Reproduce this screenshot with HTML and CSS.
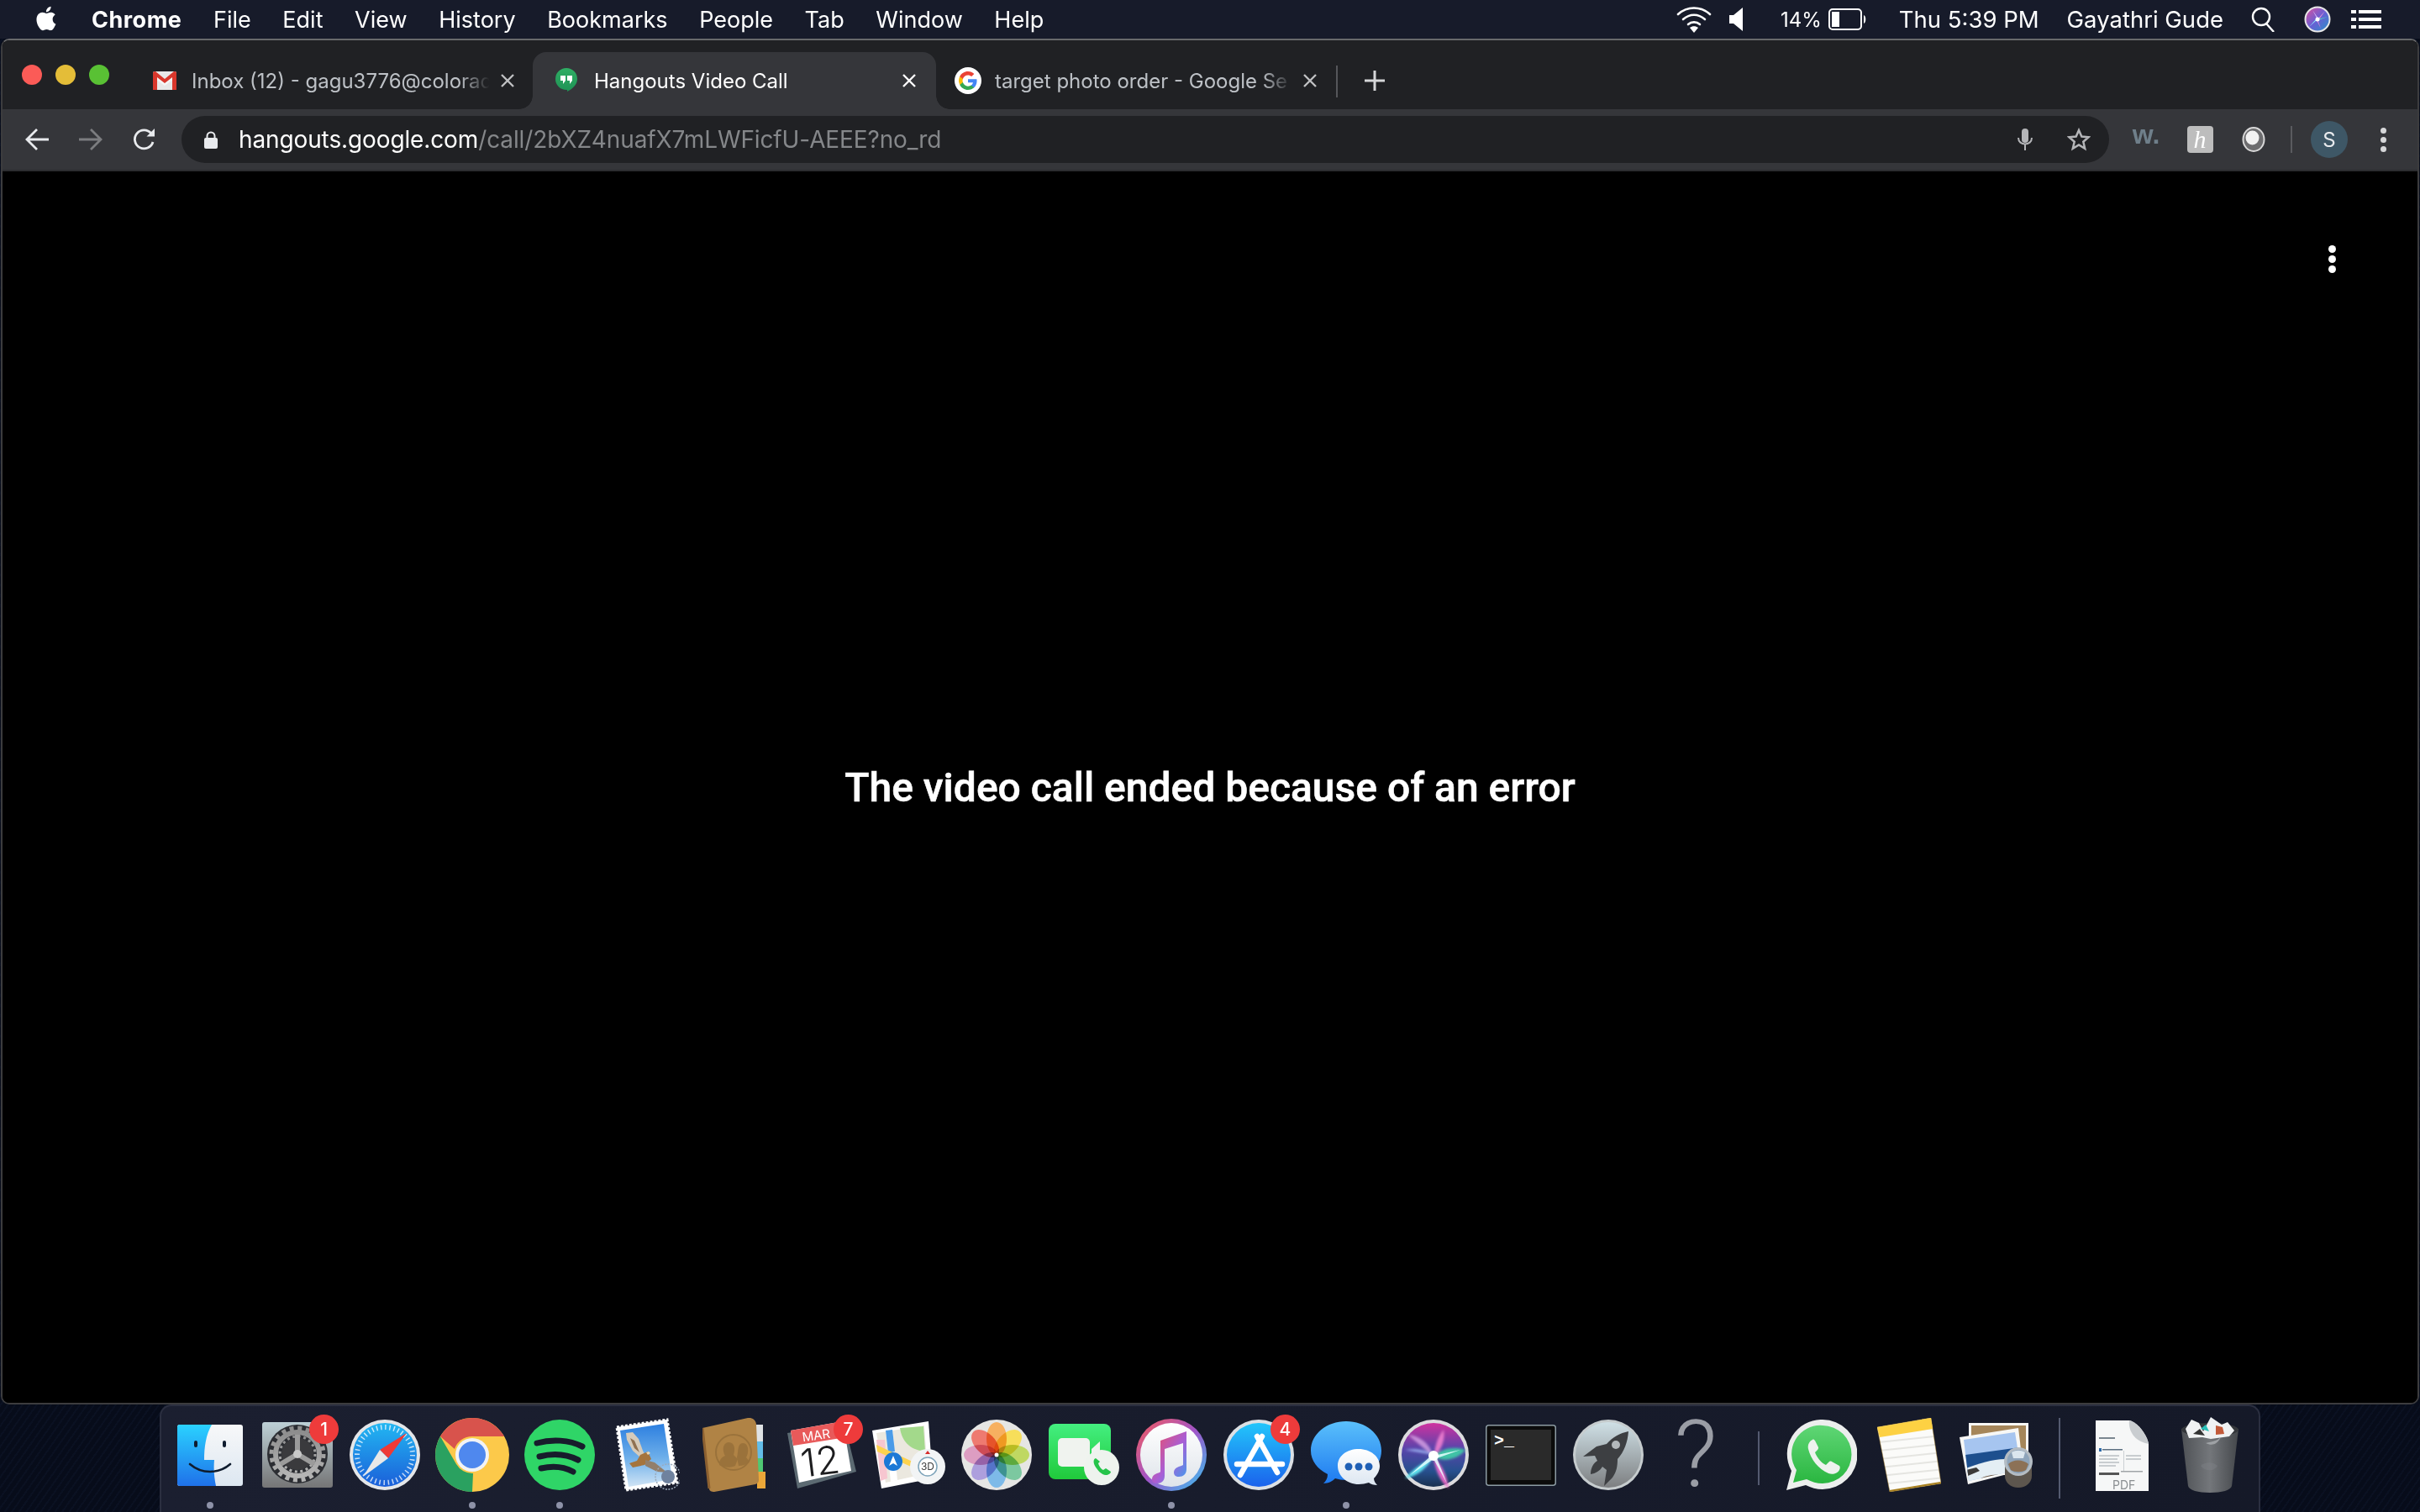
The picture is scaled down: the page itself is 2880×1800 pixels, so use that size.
FILE: index.html
```html
<!DOCTYPE html>
<html lang="en">
<head>
<meta charset="utf-8">
<title>Hangouts Video Call</title>
<link rel="stylesheet" href="styles.css">
</head>
<body>
<div class="desktop">
  <header class="menubar">
    <svg class="apple" viewBox="0 0 24 24" width="34" height="34"><path fill="#fff" d="M18.71 19.5c-.83 1.24-1.71 2.45-3.05 2.47-1.34.03-1.77-.79-3.29-.79-1.53 0-2 .77-3.27.82-1.31.05-2.3-1.32-3.14-2.53C4.25 17 2.94 12.45 4.7 9.39c.87-1.52 2.43-2.48 4.12-2.51 1.28-.02 2.5.87 3.29.87.78 0 2.26-1.07 3.8-.91.65.03 2.47.26 3.64 1.98-.09.06-2.17 1.28-2.15 3.81.03 3.02 2.65 4.03 2.68 4.04-.03.07-.42 1.44-1.38 2.83M13 3.5c.73-.83 1.94-1.46 2.94-1.5.13 1.17-.34 2.35-1.04 3.19-.69.85-1.83 1.51-2.95 1.42-.15-1.15.41-2.35 1.05-3.11z"/></svg>
    <nav class="menus">
      <span class="menu-app">Chrome</span><span>File</span><span>Edit</span><span>View</span><span>History</span><span>Bookmarks</span><span>People</span><span>Tab</span><span>Window</span><span>Help</span>
    </nav>
    <div class="status">
      <svg class="st-wifi" viewBox="0 0 42 32" width="42" height="32" fill="none" stroke="#fff" stroke-width="2.6" stroke-linecap="round"><path d="M2 10C13 0 29 0 40 10"/><path d="M8 16C16 9 26 9 34 16"/><path d="M14 22C18 18.500 24 18.500 28 22"/><path fill="#fff" stroke="none" d="M21 32l-5-6c3-2.500 7-2.500 10 0z"/></svg>
      <svg class="st-vol" viewBox="0 0 16 28" width="16" height="28"><path fill="#fff" d="M0 9h5L16 0v28L5 19H0z"/></svg>
      <span class="st-pct">14%</span>
      <svg class="st-batt" viewBox="0 0 46 26" width="46" height="26"><rect x="1" y="1" width="38" height="24" rx="4" fill="none" stroke="#fff" stroke-width="2"/><rect x="4" y="4" width="9" height="18" fill="#fff"/><path d="M42 8c3 1 3 9 0 10z" fill="#fff"/></svg>
      <span class="st-time">Thu 5:39 PM</span>
      <span class="st-user">Gayathri Gude</span>
      <svg class="st-search" viewBox="0 0 28 30" width="28" height="30" fill="none" stroke="#fff" stroke-width="2.400"><circle cx="12" cy="12" r="10"/><path d="M18 20l9 10"/></svg>
      <svg class="st-siri" viewBox="0 0 32 32" width="32" height="32"><defs><linearGradient id="mSiri" x1="0" y1="0" x2="1" y2="1"><stop offset="0" stop-color="#d9509f"/><stop offset=".5" stop-color="#6a5fd4"/><stop offset="1" stop-color="#2a8fc8"/></linearGradient></defs><circle cx="16" cy="16" r="15.500" fill="#e8e8e8"/><circle cx="16" cy="16" r="13.500" fill="url(#mSiri)"/><path d="M16 16L25 6 17.500 16.500z" fill="#f59ad0"/><path d="M16 16L28 13 17 17z" fill="#55e0c0"/><path d="M16 16L6 25 15 15z" fill="#8ef0ff"/><path d="M16 16l4 11-5-10z" fill="#ef86d8"/><path d="M16 16L10 5l7 10z" fill="#d9c2ff"/><circle cx="16" cy="16" r="2.500" fill="#fff"/></svg>
      <svg class="st-list" viewBox="0 0 36 22" width="36" height="22" fill="#fff"><rect x="0" y="0" width="6" height="4"/><rect x="9" y="0" width="27" height="4"/><rect x="0" y="9" width="6" height="4"/><rect x="9" y="9" width="27" height="4"/><rect x="0" y="18" width="6" height="4"/><rect x="9" y="18" width="27" height="4"/></svg>
    </div>
  </header>

  <section class="window">
    <div class="tabstrip">
      <div class="lights"><i class="light red"></i><i class="light yellow"></i><i class="light green"></i></div>
      <div class="tab tab-a">
        <svg class="fav" viewBox="0 0 28 22" width="28" height="22"><rect width="28" height="22" rx="2" fill="#e8e8e8"/><path d="M0 2l14 11L28 2v5L14 17 0 7z" fill="#f5f5f5"/><path d="M0 2c0-1 1-2 2-2h1l11 9L25 0h1c1 0 2 1 2 2v20h-5V7l-9 7-9-7v15H0z" fill="#d9372c"/></svg>
        <span class="tab-title">Inbox (12) - gagu3776@colorad</span>
        <svg class="tab-x" viewBox="0 0 16 16" width="16" height="16"><path d="M1 1l14 14M15 1L1 15" stroke="#c0c1c3" stroke-width="2.400"/></svg>
      </div>
      <div class="tab tab-b active">
        <svg class="fav" viewBox="0 0 26 30" width="26" height="30"><defs><linearGradient id="hgo" x1="0" y1="0" x2="0" y2="1"><stop offset="0" stop-color="#2fae64"/><stop offset="1" stop-color="#1f9255"/></linearGradient></defs><path d="M13 0a13 13 0 0 1 13 13c0 7-6 12-12 15v-2.000h-1a13 13 0 0 1 0-26z" fill="url(#hgo)"/><path d="M6 9h6v6l-3 4v-4H6zM14 9h6v6l-3 4v-4h-3z" fill="#fff"/></svg>
        <span class="tab-title">Hangouts Video Call</span>
        <svg class="tab-x" viewBox="0 0 16 16" width="16" height="16"><path d="M1 1l14 14M15 1L1 15" stroke="#fff" stroke-width="2.400"/></svg>
      </div>
      <div class="tab tab-c">
        <svg class="fav" viewBox="0 0 32 32" width="32" height="32"><circle cx="16" cy="16" r="16" fill="#fff"/><g transform="translate(5 5) scale(.917)"><path fill="#4285F4" d="M23.500 12.300c0-.8-.1-1.600-.2-2.300H12v4.500h6.500c-.3 1.500-1.100 2.700-2.400 3.600v3h3.800c2.300-2.100 3.600-5.200 3.600-8.800z"/><path fill="#34A853" d="M12 24c3.200 0 6-1.100 7.900-2.900l-3.800-3c-1.100.7-2.400 1.200-4.100 1.200-3.100 0-5.800-2.100-6.700-5H1.300v3.100C3.300 21.300 7.300 24 12 24z"/><path fill="#FBBC05" d="M5.300 14.300c-.5-1.500-.5-3.100 0-4.600V6.600h-4a12 12 0 0 0 0 10.800z"/><path fill="#EA4335" d="M12 4.800c1.800 0 3.300.6 4.600 1.800l3.400-3.400C17.900 1.200 15.200 0 12 0 7.300 0 3.300 2.700 1.300 6.600l4 3.100c.9-2.800 3.600-4.900 6.700-4.900z"/></g></svg>
        <span class="tab-title">target photo order - Google Se</span>
        <svg class="tab-x" viewBox="0 0 16 16" width="16" height="16"><path d="M1 1l14 14M15 1L1 15" stroke="#c0c1c3" stroke-width="2.400"/></svg>
      </div>
      <i class="tab-sep"></i>
      <svg class="new-tab" viewBox="0 0 24 24" width="24" height="24"><path d="M12 0v24M0 12h24" stroke="#d5d6d8" stroke-width="3"/></svg>
    </div>

    <div class="toolbar">
      <button class="tb-btn"><svg viewBox="0 0 28 26" width="28" height="26" fill="none" stroke="#e8eaed" stroke-width="2.800"><path d="M28 13H3M14 1L2 13l12 12"/></svg></button>
      <button class="tb-btn"><svg viewBox="0 0 28 26" width="28" height="26" fill="none" stroke="#7c7d80" stroke-width="2.800"><path d="M0 13h25M14 1l12 12-12 12"/></svg></button>
      <button class="tb-btn"><svg viewBox="0 0 28 28" width="28" height="28" fill="none" stroke="#e8eaed" stroke-width="2.800"><path d="M24 17a11 11 0 1 1-2-10"/><path d="M26 1v9.500h-9.500z" fill="#e8eaed" stroke="none"/></svg></button>
      <div class="omnibox">
        <svg class="lock" viewBox="0 0 16 21" width="16" height="21"><path d="M3.500 9V6a4.500 4.500 0 0 1 9 0v3" fill="none" stroke="#e8eaed" stroke-width="2"/><rect y="8" width="16" height="13" rx="2" fill="#e8eaed"/></svg>
        <span class="url"><b>hangouts.google.com</b>/call/2bXZ4nuafX7mLWFicfU-AEEE?no_rd</span>
        <span class="omni-icon"><svg viewBox="0 0 20 26" width="20" height="26"><rect x="6" y="0" width="8" height="17" rx="4" fill="#b4b5b8"/><path d="M2 11c0 10 16 10 16 0M10 19v7" fill="none" stroke="#b4b5b8" stroke-width="2"/></svg></span>
        <span class="omni-icon"><svg viewBox="0 0 28 28" width="28" height="28"><path d="M14 3l3.300 7.600 8.200.7-6.200 5.400 1.900 8.100L14 20.500l-7.200 4.300 1.900-8.100-6.200-5.400 8.200-.7z" fill="none" stroke="#b4b5b8" stroke-width="2.500"/></svg></span>
      </div>
      <div class="ext-group">
        <span class="ext ext-w">w.</span>
        <span class="ext"><span class="ext-h">h</span></span>
        <span class="ext"><svg viewBox="0 0 28 32" width="28" height="32"><ellipse cx="14" cy="16" rx="13.500" ry="15" fill="#d8d8d8"/><ellipse cx="14" cy="16" rx="11.500" ry="13" fill="#6c6c6e"/><ellipse cx="12.500" cy="14" rx="8" ry="8.500" fill="#f1f1f1"/></svg></span>
        <i class="ext-sep"></i>
        <span class="ext"><span class="avatar">S</span></span>
        <span class="ext"><span class="kebab small"><i></i><i></i><i></i></span></span>
      </div>
    </div>

    <main class="page">
      <span class="kebab page-menu"><i></i><i></i><i></i></span>
      <h1 class="message">The video call ended because of an error</h1>
    </main>
  </section>

  <footer class="dock">
    <div class="app"><div class="slot">
      <svg viewBox="0 0 78 73" width="78" height="73"><defs><linearGradient id="fb" x1="0" y1="0" x2="0" y2="1"><stop offset="0" stop-color="#2ad2ff"/><stop offset="1" stop-color="#1f71ea"/></linearGradient><linearGradient id="fw" x1="0" y1="0" x2="0" y2="1"><stop offset="0" stop-color="#f7f8f9"/><stop offset="1" stop-color="#dde7f1"/></linearGradient></defs><rect width="78" height="73" rx="3" fill="url(#fw)"/><path d="M3 0h38c-7 12-9 27-9 42h12c-1 11 0 22 2 31H3a3 3 0 0 1-3-3V3a3 3 0 0 1 3-3z" fill="url(#fb)"/><rect x="20" y="19" width="4" height="8" rx="2" fill="#0f1c2e"/><rect x="54" y="19" width="4" height="8" rx="2" fill="#0f1c2e"/><path d="M15 47c14 12 34 12 48 0" fill="none" stroke="#0f1c2e" stroke-width="2.600" stroke-linecap="round"/></svg>
    </div><i class="dot"></i></div>

    <div class="app"><div class="slot">
      <svg viewBox="0 0 84 78" width="84" height="78"><defs><linearGradient id="sp" x1="0" y1="0" x2="0" y2="1"><stop offset="0" stop-color="#bdd0d6"/><stop offset="1" stop-color="#757576"/></linearGradient><linearGradient id="spg" x1="0" y1="0" x2="0" y2="1"><stop offset="0" stop-color="#8d8d8d"/><stop offset="1" stop-color="#b5b5b5"/></linearGradient></defs><rect width="84" height="78" rx="3" fill="url(#sp)"/><ellipse cx="42" cy="38" rx="36" ry="35" fill="#2c2e33"/><circle cx="42" cy="38" r="26" fill="none" stroke="url(#spg)" stroke-width="6"/><circle cx="42" cy="38" r="31" fill="none" stroke="url(#spg)" stroke-width="5" stroke-dasharray="5 4.740"/><circle cx="42" cy="38" r="21" fill="none" stroke="url(#spg)" stroke-width="3" stroke-dasharray="3 3.600"/><circle cx="42" cy="38" r="19" fill="#3a3a3d"/><path d="M42 38V15M42 38L22 50M42 38l20 12" stroke="#9b9b9b" stroke-width="6"/><circle cx="42" cy="38" r="5" fill="#c9c9c9"/></svg>
      <span class="badge">1</span>
    </div><i class="dot off"></i></div>

    <div class="app"><div class="slot">
      <svg viewBox="0 0 84 84" width="84" height="84"><defs><linearGradient id="sf" x1="0" y1="0" x2="0" y2="1"><stop offset="0" stop-color="#22b7f2"/><stop offset="1" stop-color="#1b5fd9"/></linearGradient></defs><circle cx="42" cy="42" r="42" fill="#e4e6e8"/><circle cx="42" cy="42" r="38" fill="url(#sf)"/><circle cx="42" cy="42" r="33" fill="none" stroke="#fff" stroke-opacity=".75" stroke-width="6" stroke-dasharray="1.500 3.680"/><path d="M68 16L36 36l10 10z" fill="#ee3a36"/><path d="M16 68l20-32 10 10z" fill="#e8e8e8"/></svg>
    </div><i class="dot off"></i></div>

    <div class="app"><div class="slot">
      <svg viewBox="0 0 88 88" width="88" height="88"><circle cx="44" cy="44" r="44" fill="#fcc94a"/><path d="M44 0a44 44 0 0 1 38.100 22H44a22 22 0 0 0-21 15L6 22A44 44 0 0 1 44 0z" fill="#d8534c"/><path d="M6 22l19 33a22 22 0 0 0 20 11L44 88h-3A44 44 0 0 1 6 22z" fill="#2aa160"/><circle cx="44" cy="44" r="20" fill="#f2f3f5"/><circle cx="44" cy="44" r="16" fill="#4f88ee"/></svg>
    </div><i class="dot"></i></div>

    <div class="app"><div class="slot">
      <svg viewBox="0 0 84 84" width="84" height="84"><circle cx="42" cy="42" r="42" fill="#2fd567"/><path d="M15 28c18-5 38-4 54 4M18 44c16-4 32-3 46 4M20 58c13-3 27-2 38 4" fill="none" stroke="#181c2c" stroke-width="7" stroke-linecap="round"/></svg>
    </div><i class="dot"></i></div>

    <div class="app"><div class="slot">
      <svg viewBox="0 0 78 88" width="78" height="88"><defs><linearGradient id="msk" x1="0" y1="0" x2="0" y2="1"><stop offset="0" stop-color="#2c7fe0"/><stop offset=".55" stop-color="#6fb0ea"/><stop offset="1" stop-color="#d0e4f5"/></linearGradient></defs><path d="M3 11L63 2l12 75-61 9z" fill="#fff" stroke="#fff" stroke-width="3" stroke-dasharray="3 2"/><path d="M7 15l52-8 10 66-52 9z" fill="url(#msk)"/><path d="M14 18l8-1 7 8 5 14 3 6-6 2-9-8-7-13z" fill="#d5cbbb"/><path d="M19 24l5 3 6 14-6-5z" fill="#8f7152"/><path d="M31 44l9-4 4 9-8 7-14 3-4-5 9-3z" fill="#a5743d"/><path d="M37 50l11 3 15 12-12-1-14-7z" fill="#927f6c"/><path d="M38 41l3-1 2 2-3 2z" fill="#ead8b5"/><circle cx="64" cy="70" r="15" fill="none" stroke="#9ba9ba" stroke-width="1.500" stroke-dasharray="2 1.500"/><circle cx="64" cy="70" r="8" fill="#6f829e"/></svg>
    </div><i class="dot off"></i></div>

    <div class="app"><div class="slot">
      <svg viewBox="0 0 76 88" width="76" height="88"><g><rect x="62" y="8" width="10" height="22" fill="#dfe2e4"/><rect x="62" y="28" width="10" height="22" fill="#63bde8"/><rect x="62" y="48" width="10" height="20" fill="#4fc873"/><rect x="65" y="64" width="10" height="20" fill="#eba739"/></g><path d="M0 12L54 0c5-1 10 3 10 8l3 66c0 3-2 4-4 5L14 88c-3 0-6-1-6-4z" fill="#b08345"/><path d="M0 12l8 72" stroke="#8c6030" stroke-width="3"/><circle cx="37" cy="41" r="21" fill="none" stroke="#9a723b" stroke-width="2"/><path d="M20 56c0-7 3-9 7-11-3-5-4-15 4-16 8 0 8 9 6 15l5 5-3 8c-6 3-14 2-19-1z" fill="#9a723b"/><path d="M41 47c2-5 0-17 7-17 8 0 7 13 4 17l4 5c-3 3-8 5-13 5z" fill="#9a723b"/></svg>
    </div><i class="dot off"></i></div>

    <div class="app"><div class="slot">
      <svg viewBox="0 0 82 82" width="82" height="82"><path d="M0 15L68 4l14 57-70 20z" fill="#5c6a72"/><path d="M4 12L66 1l10 59-62 14z" fill="#fff"/><path d="M4 12L66 1l4 19L7 30z" fill="#e85a5a"/><text class="cal-mon" x="35" y="23" transform="rotate(-8 35 23)">MAR</text><text class="cal-day" x="41" y="65" transform="rotate(-7 41 65)">12</text></svg>
      <span class="badge">7</span>
    </div><i class="dot off"></i></div>

    <div class="app"><div class="slot">
      <svg viewBox="0 0 88 80" width="88" height="80"><path d="M0 11L67 0l5 68-61 12z" fill="#fff"/><path d="M5 14l57-9 4 57-50 11z" fill="#ebe8df"/><path d="M33 8c2 14 10 26 30 28l-2-30z" fill="#a3d98b"/><path d="M5 22l10 0 3 46-8 3z" fill="#f7c6d0"/><path d="M16 11l8-1 6 60-8 2z" fill="#fff"/><path d="M16 11l8-1 3 26-8 2z" fill="#4a9be8"/><path d="M5 28l60 28-1 6L6 36z" fill="#fdd24e"/><circle cx="25" cy="48" r="11" fill="#1b78d6"/><path d="M25 41l5 12-5-3-5 3z" fill="#fff"/><circle cx="66" cy="54" r="21" fill="#f2f4f5"/><circle cx="66" cy="54" r="11" fill="#fff" stroke="#7ea4ba" stroke-width="1.500"/><text class="map-3d" x="66" y="58">3D</text><path d="M66 35l3 4h-6z" fill="#d62a2a"/></svg>
    </div><i class="dot off"></i></div>

    <div class="app"><div class="slot">
      <svg viewBox="0 0 84 84" width="84" height="84"><circle cx="42" cy="42" r="42" fill="#e6e6e4"/><g class="petals" transform="translate(42 42)"><ellipse cy="-19" rx="12" ry="20" fill="#f7b060"/><ellipse cy="-19" rx="12" ry="20" fill="#f7de5a" transform="rotate(45)"/><ellipse cy="-19" rx="12" ry="20" fill="#bfd862" transform="rotate(90)"/><ellipse cy="-19" rx="12" ry="20" fill="#7cc8a0" transform="rotate(135)"/><ellipse cy="-19" rx="12" ry="20" fill="#7dbae8" transform="rotate(180)"/><ellipse cy="-19" rx="12" ry="20" fill="#ad9fdd" transform="rotate(225)"/><ellipse cy="-19" rx="12" ry="20" fill="#dd9dc2" transform="rotate(270)"/><ellipse cy="-19" rx="12" ry="20" fill="#ee7a70" transform="rotate(315)"/></g><circle cx="42" cy="42" r="2.500" fill="#fff"/></svg>
    </div><i class="dot off"></i></div>

    <div class="app"><div class="slot">
      <svg viewBox="0 0 84 74" width="84" height="74"><defs><linearGradient id="ft" x1="0" y1="0" x2="0" y2="1"><stop offset="0" stop-color="#44ef80"/><stop offset="1" stop-color="#20c93b"/></linearGradient></defs><rect width="74" height="66" x="0" y="0" rx="8" fill="url(#ft)"/><rect x="11" y="17" width="38" height="34" rx="5" fill="#f0f3ef"/><path d="M51 30l10-9v26l-10-9z" fill="#f0f3ef"/><ellipse cx="63" cy="52" rx="21" ry="21" fill="#eef3ee"/><path d="M56 41c-3 1-3 5-1 9 3 5 8 11 13 11 3 0 6-2 6-4l-6-4-3 2c-3-1-5-5-6-8l2-2z" fill="#25c44a"/></svg>
    </div><i class="dot off"></i></div>

    <div class="app"><div class="slot">
      <svg viewBox="0 0 84 86" width="84" height="86"><defs><linearGradient id="itr" x1="0" y1="0" x2="1" y2="1"><stop offset="0" stop-color="#f95c59"/><stop offset=".5" stop-color="#a054c8"/><stop offset="1" stop-color="#33c8f2"/></linearGradient><linearGradient id="itn" x1="0" y1="0" x2="1" y2="1"><stop offset="0" stop-color="#f24d5e"/><stop offset=".55" stop-color="#a85ed6"/><stop offset="1" stop-color="#3aa0ef"/></linearGradient><linearGradient id="itb" x1="0" y1="0" x2="0" y2="1"><stop offset="0" stop-color="#fff"/><stop offset="1" stop-color="#dfe4ea"/></linearGradient></defs><ellipse cx="42" cy="43" rx="42" ry="43" fill="url(#itr)"/><ellipse cx="42" cy="43" rx="37" ry="38" fill="url(#itb)"/><path d="M29 26l31-11v45c0 6-4 9-9 9-4 0-6-2-6-5 0-5 5-7 9-8l2-1V29l-22 7v32c0 6-4 9-9 9-4 0-6-2-6-5 0-5 5-7 9-8l1-1z" fill="url(#itn)"/></svg>
    </div><i class="dot"></i></div>

    <div class="app"><div class="slot">
      <svg viewBox="0 0 84 84" width="84" height="84"><defs><linearGradient id="as" x1="0" y1="0" x2="0" y2="1"><stop offset="0" stop-color="#22c6fb"/><stop offset="1" stop-color="#1b62ec"/></linearGradient></defs><circle cx="42" cy="42" r="42" fill="#dce0e4"/><circle cx="42" cy="42" r="38" fill="url(#as)"/><path d="M40 20l24 43M46 20L20 66M16 53h54" fill="none" stroke="#fff" stroke-width="6.500" stroke-linecap="round"/></svg>
      <span class="badge">4</span>
    </div><i class="dot off"></i></div>

    <div class="app"><div class="slot">
      <svg viewBox="0 0 84 80" width="84" height="80"><defs><linearGradient id="ms" x1="0" y1="0" x2="0" y2="1"><stop offset="0" stop-color="#5ac0fb"/><stop offset="1" stop-color="#1e7af0"/></linearGradient><linearGradient id="mw" x1="0" y1="0" x2="0" y2="1"><stop offset="0" stop-color="#fff"/><stop offset="1" stop-color="#dce6f1"/></linearGradient></defs><path d="M42 0c23 0 42 15 42 35S65 70 42 70c-5 0-9-1-13-2-3 3-8 6-14 6 3-3 5-6 5-11C8 57 0 47 0 35 0 15 19 0 42 0z" fill="url(#ms)"/><path d="M57 33c14 0 25 9 25 20 0 6-3 11-7 15 0 3 2 6 4 8-4 0-8-1-10-3-4 1-8 2-12 2-14 0-25-10-25-22s11-20 25-20z" fill="url(#mw)"/><circle cx="45" cy="54" r="4.500" fill="#1f60b5"/><circle cx="57" cy="54" r="4.500" fill="#1f60b5"/><circle cx="69" cy="54" r="4.500" fill="#1f60b5"/></svg>
    </div><i class="dot"></i></div>

    <div class="app"><div class="slot">
      <svg viewBox="0 0 84 84" width="84" height="84"><defs><linearGradient id="sb" x1="0" y1="0" x2="0" y2="1"><stop offset="0" stop-color="#d0329f"/><stop offset=".4" stop-color="#5a44ab"/><stop offset=".75" stop-color="#27508f"/><stop offset="1" stop-color="#19314f"/></linearGradient><filter id="sblur" x="-20%" y="-20%" width="140%" height="140%"><feGaussianBlur stdDeviation="1.800"/></filter></defs><circle cx="42" cy="42" r="42" fill="#dcdcde"/><circle cx="42" cy="42" r="38" fill="url(#sb)"/><g filter="url(#sblur)"><path d="M42 44C26 30 18 24 12 18c16 2 26 12 30 26z" fill="#d7a4e6" opacity=".8"/><path d="M42 44c2-12 4-22 12-32 2 12-2 24-12 32z" fill="#f07fd0" opacity=".9"/><path d="M42 44C52 34 66 32 80 36 72 46 56 52 42 44z" fill="#3fc9a5" opacity=".95"/><path d="M42 44c10 10 16 22 18 38-10-8-16-22-18-38z" fill="#f06bcc" opacity=".95"/><path d="M42 44C32 50 18 58 8 70c14-2 26-12 34-26z" fill="#5fe3ee"/><path d="M42 42L8 36c12-2 26 0 34 6z" fill="#a9c7ff" opacity=".8"/></g><path d="M42 43L74 36 46 46 58 76 42 47 14 66 38 44z" fill="#e6ffff" opacity=".85"/><circle cx="42" cy="43" r="6" fill="#fff"/></svg>
    </div><i class="dot off"></i></div>

    <div class="app"><div class="slot">
      <svg viewBox="0 0 84 73" width="84" height="73"><rect x=".75" y=".75" width="82.500" height="71.500" rx="3" fill="#0b0b0b" stroke="#8c9ba3" stroke-width="1.500"/><rect x="6" y="6" width="72" height="60" fill="#2a2a2a"/><text class="term" x="10" y="25">&gt;_</text></svg>
    </div><i class="dot off"></i></div>

    <div class="app"><div class="slot">
      <svg viewBox="0 0 84 84" width="84" height="84"><defs><linearGradient id="lp" x1="0" y1="0" x2="0" y2="1"><stop offset="0" stop-color="#cfe0e6"/><stop offset="1" stop-color="#7d7f81"/></linearGradient></defs><circle cx="42" cy="42" r="42" fill="#c6ccce"/><circle cx="42" cy="42" r="39" fill="url(#lp)"/><path d="M66 14c-10 2-19 7-26 15l-12 3-16 12 14-1 3 6c-5 3-8 9-8 16 6-1 11-4 14-9l5 4-3 19 10-10c5-7 6-14 6-22 8-9 12-20 13-33z" fill="#3d3f42"/><circle cx="51" cy="30" r="5" fill="#b3b8bb"/></svg>
    </div><i class="dot off"></i></div>

    <div class="app"><div class="slot"><span class="unknown">?</span></div><i class="dot off"></i></div>

    <i class="sep sep-short"></i>

    <div class="app"><div class="slot">
      <svg viewBox="0 0 84 84" width="84" height="84"><defs><linearGradient id="wa" x1="0" y1="0" x2="0" y2="1"><stop offset="0" stop-color="#5fd675"/><stop offset="1" stop-color="#2ab640"/></linearGradient></defs><path d="M43 0a41 41 0 0 1 0 83c-7 0-14-2-20-5L0 84l6-23A41 41 0 0 1 43 0z" fill="#eceeed"/><path d="M43 7a34 34 0 0 1 0 69c-7 0-13-2-19-5L8 75l4-15A34 34 0 0 1 43 7z" fill="url(#wa)"/><path d="M31 24c-4 2-6 6-5 11 3 12 12 24 24 29 5 2 11 0 13-4 1-2 1-4 0-5l-9-5c-2-1-3 0-4 1l-3 3c-5-2-11-9-13-15l3-3c1-1 1-2 1-3l-4-8c-1-1-2-2-3-1z" fill="#eef2ee"/></svg>
    </div><i class="dot off"></i></div>

    <div class="app"><div class="slot">
      <svg viewBox="0 0 76 88" width="76" height="88"><defs><pattern id="nl" width="76" height="10" patternUnits="userSpaceOnUse" patternTransform="rotate(-6)"><rect width="76" height="10" fill="#fbfbf9"/><rect y="8.500" width="76" height="1" fill="#cfcfca"/></pattern></defs><path d="M0 11L64 0l12 78-61 10z" fill="url(#nl)" stroke="#b38a32" stroke-width=".5"/><path d="M0 11L64 0l2 13L3 23z" fill="#fdd143"/><path d="M15 88l61-10-.5-2-61 10z" fill="#a8801f"/></svg>
    </div><i class="dot off"></i></div>

    <div class="app"><div class="slot">
      <svg viewBox="0 0 88 78" width="88" height="78"><defs><clipPath id="pvc"><path d="M5 21l61-9 7 44-62 14z"/></clipPath></defs><rect x="11" y="1" width="71" height="62" fill="#f7f7f5"/><rect x="14" y="4" width="65" height="56" fill="#a5865a"/><path d="M0 18l70-11 6 50-66 17z" fill="#f7f7f5"/><g clip-path="url(#pvc)"><rect width="88" height="78" fill="#a6c5f0"/><path d="M0 40l72-10v18L0 62z" fill="#1d4f8e"/><path d="M0 58c20-8 38-14 54-14l20 8v24H0z" fill="#e4eef4"/><path d="M4 58l16-4 4 4-14 6z" fill="#3b3a38"/><path d="M18 72c8-8 24-12 40-8l8 12z" fill="#6b533c"/></g><path d="M54 50v14c0 8 7 14 16 14s16-6 16-14V50z" fill="#5d564e"/><ellipse cx="70" cy="47" rx="17" ry="17" fill="#b4bcc3"/><ellipse cx="70" cy="47" rx="13.500" ry="14" fill="#8ea4ba"/><path d="M58 50c5-6 18-6 24 0l-3 7c-5 3-13 3-18 0z" fill="#8c7156"/><path d="M62 36c5-3 11-3 16 0l-2 7H64z" fill="#dbe6ee"/></svg>
    </div><i class="dot off"></i></div>

    <i class="sep sep-tall"></i>

    <div class="app"><div class="slot">
      <svg viewBox="0 0 64 86" width="64" height="86"><path d="M0 2h40c10 2 22 18 23 28v56H0z" fill="#f6f7f7"/><path d="M40 2c-1 8 2 24 23 28-2-10-12-26-23-28z" fill="#c9cdd0"/><rect x="4" y="22" width="19" height="2" fill="#7b8790"/><rect x="4" y="35" width="3" height="4" fill="#2d6aa8"/><rect x="8" y="36" width="24" height="1.500" fill="#5b6f80"/><path d="M4 44h24M4 48h22M4 52h24M4 56h20M36 44h18M36 48h18" stroke="#9aa2a8" stroke-width="1"/><rect x="33" y="38" width="1" height="24" fill="#ccd0d3"/><rect x="4" y="64" width="24" height="3" fill="#555"/><rect x="30" y="62" width="26" height="1.500" fill="#a0a5a8"/><text class="pdf-tag" x="20" y="84">PDF</text></svg>
    </div><i class="dot off"></i></div>

    <div class="app"><div class="slot">
      <svg viewBox="0 0 70 90" width="70" height="90"><defs><linearGradient id="tr" x1="0" y1="0" x2="1" y2="0"><stop offset="0" stop-color="#4e5155"/><stop offset=".5" stop-color="#74777b"/><stop offset="1" stop-color="#44474b"/></linearGradient></defs><path d="M1 14h68l-8 68c-1 5-12 8-26 8S10 87 9 82z" fill="url(#tr)"/><ellipse cx="35" cy="15" rx="34" ry="8" fill="#33363a"/><path d="M6 14L13 3l9 4 5 10 9-17 13 9 7-3 8 10-6 7-22 3-10-2-16 1z" fill="#f0f2f3"/><path d="M15 20l8-6 6 8z" fill="#333"/><path d="M24 14l6-5 4 8z" fill="#28c0b8"/><path d="M42 10l8 2 2 8-10 1z" fill="#c25a3a"/><path d="M30 31c8-2 14-3 18-7-4 8-10 11-18 7z" fill="#b3b6ba" opacity=".7"/><path d="M24 58c6-6 16-4 20 0-3 6-14 8-20 0z" fill="#85888c" opacity=".35"/></svg>
    </div><i class="dot off"></i></div>
  </footer>
</div>
</body>
</html>
```

FILE: styles.css
```css
* { box-sizing: border-box; }
html, body { margin: 0; padding: 0; }
body { width: 2880px; height: 1800px; overflow: hidden; background: #070c1a; font-family: "Inter", "Liberation Sans", sans-serif; color: #fff; }

.desktop {
  width: 2880px; height: 1800px; display: flex; flex-direction: column;
  background-color: #070c1a;
  background-image: repeating-linear-gradient(125deg, rgba(40,60,100,.10) 0 2px, transparent 2px 7px);
}

/* menu bar */
.menubar { height: 46px; flex: none; display: flex; align-items: center; background: #171b2a; padding-left: 38px; padding-right: 46px; font-size: 27px; }
.apple { flex: none; margin-top: -3px; }
.menus { display: flex; gap: 37.6px; margin-left: 37px; white-space: nowrap; }
.menu-app { font-weight: 700; letter-spacing: .5px; }
.status { margin-left: auto; display: flex; align-items: center; white-space: nowrap; }
.st-vol { margin-left: 21px; }
.st-pct { margin-left: 45px; font-size: 24px; }
.st-batt { margin-left: 8px; }
.st-time { margin-left: 38px; font-size: 27.5px; }
.st-user { margin-left: 33px; font-size: 27.5px; }
.st-search { margin-left: 33px; }
.st-siri { margin-left: 35px; }
.st-list { margin-left: 24px; }

/* window */
.window { height: 1626px; flex: none; margin: 0 1px; display: flex; flex-direction: column; background: #000; border: 2px solid #3c3c3e; border-top-color: #68696b; border-radius: 10px; overflow: hidden; }
.tabstrip { height: 82px; flex: none; display: flex; align-items: flex-end; background: #202124; }
.lights { width: 161px; height: 68px; flex: none; display: flex; gap: 16px; padding: 15px 0 0 23px; }
.light { width: 24px; height: 24px; border-radius: 50%; }
.red { background: #fb5b57; }
.yellow { background: #e4bd38; }
.green { background: #59c134; }

.tab { height: 68px; flex: none; display: flex; align-items: center; position: relative; border-radius: 16px 16px 0 0; font-size: 24px; color: #bdc1c6; }
.tab-a { width: 470px; padding-left: 18px; }
.tab-b { width: 480px; padding-left: 27px; color: #fff; }
.tab-c { width: 476px; padding-left: 22px; }
.active { background: #35363a; }
.active::before, .active::after { content: ""; position: absolute; bottom: 0; width: 16px; height: 16px; }
.active::before { left: -16px; background: radial-gradient(circle at 0 0, transparent 15.5px, #35363a 16px); }
.active::after { right: -16px; background: radial-gradient(circle at 100% 0, transparent 15.5px, #35363a 16px); }
.fav { flex: none; }
.tab-title { flex: 1; min-width: 0; margin-left: 18px; overflow: hidden; white-space: nowrap; -webkit-mask-image: linear-gradient(90deg, #000 88%, transparent 98%); mask-image: linear-gradient(90deg, #000 88%, transparent 98%); }
.active .tab-title { margin-left: 20px; -webkit-mask-image: none; mask-image: none; }
.tab-c .tab-title { margin-left: 16px; }
.tab-x { flex: none; margin: 0 22px 0 6px; }
.tab-b .tab-x { margin-right: 24px; }
.tab-c .tab-x { margin-right: 23px; }
.tab-sep { width: 2px; height: 38px; flex: none; background: #55565a; margin-bottom: 14px; }
.new-tab { flex: none; margin: 0 0 22px 32px; }

.toolbar { height: 74px; flex: none; display: flex; align-items: center; padding: 0 9px 0 9px; background: #35363a; border-bottom: 2px solid #2c2d30; }
.tb-btn { width: 64px; height: 56px; flex: none; display: flex; align-items: center; justify-content: center; padding: 0; border: 0; background: none; }
.omnibox { flex: 1; height: 56px; margin-left: 12px; display: flex; align-items: center; padding: 0 4px 0 27px; background: #202124; border-radius: 28px; font-size: 28px; letter-spacing: -.12px; }
.lock { flex: none; }
.url { flex: 1; margin-left: 25px; white-space: nowrap; color: #85878a; }
.url b { font-weight: 400; color: #fff; }
.omni-icon { width: 64px; flex: none; display: flex; justify-content: center; }
.ext-group { display: flex; align-items: center; margin-left: 12px; }
.ext { width: 64px; height: 50px; flex: none; display: flex; align-items: center; justify-content: center; }
.ext-w { font: 700 32px "Liberation Sans", sans-serif; color: #6f7f8a; padding-bottom: 12px; }
.ext-h { width: 31px; height: 32px; border-radius: 4px; display: flex; align-items: center; justify-content: center; background: #bdbdbd; color: #fff; font: italic 400 30px "Liberation Serif", serif; }
.ext-sep { width: 2px; height: 32px; flex: none; margin: 0 12px; background: #5a5b5f; }
.avatar { width: 44px; height: 44px; border-radius: 50%; display: flex; align-items: center; justify-content: center; background: #3e5766; color: #e8eaed; font-size: 24px; }
.kebab { display: flex; flex-direction: column; gap: 4px; }
.kebab i { width: 7px; height: 7px; border-radius: 50%; background: #d6d7d9; }
.page { flex: 1; display: flex; align-items: center; justify-content: center; position: relative; background: #000; }
.page-menu { position: absolute; top: 88px; right: 97px; gap: 3px; }
.page-menu i { width: 9px; height: 9px; background: #fff; }
.message { margin: 0; font: 500 48px "Roboto", sans-serif; color: #fff; -webkit-text-stroke: .6px #fff; }

/* dock */
.dock { width: 2500px; height: 128px; flex: none; margin-left: 190px; display: flex; padding-left: 6px; background: linear-gradient(90deg, #1b1f30, #151928); border: 2px solid #2b2f40; border-bottom: 0; border-radius: 14px 14px 0 0; }
.app { width: 104px; flex: none; display: flex; flex-direction: column; align-items: center; }
.slot { width: 104px; height: 92px; margin-top: 12px; flex: none; display: flex; align-items: center; justify-content: center; position: relative; }
.dot { width: 8px; height: 8px; margin-top: 10px; border-radius: 50%; background: #8e92a8; }
.dot.off { visibility: hidden; }
.badge { position: absolute; top: -2px; left: 66px; width: 35px; height: 35px; border-radius: 50%; display: flex; align-items: center; justify-content: center; background: #ee3b3b; color: #fff; font-size: 21px; font-weight: 500; }
.unknown { font: 300 112px "Roboto", sans-serif; line-height: 92px; color: #9a9da5; }
.sep { width: 2px; flex: none; margin: 0 22px; background: #545a70; }
.sep-short { height: 64px; margin-top: 30px; }
.sep-tall { height: 96px; margin-top: 14px; }
.petals { isolation: isolate; }
.petals ellipse { mix-blend-mode: multiply; }
.cal-mon { font: 400 15px "Inter", sans-serif; fill: #fff; text-anchor: middle; }
.cal-day { font: 300 46px "Inter", sans-serif; fill: #1d1d1f; text-anchor: middle; }
.map-3d { font: 400 12px "Inter", sans-serif; fill: #3a3a3a; text-anchor: middle; }
.term { font: 700 20px "Liberation Mono", monospace; fill: #fff; }
.pdf-tag { font: 400 14px "Inter", sans-serif; fill: #8b8f92; }
```
